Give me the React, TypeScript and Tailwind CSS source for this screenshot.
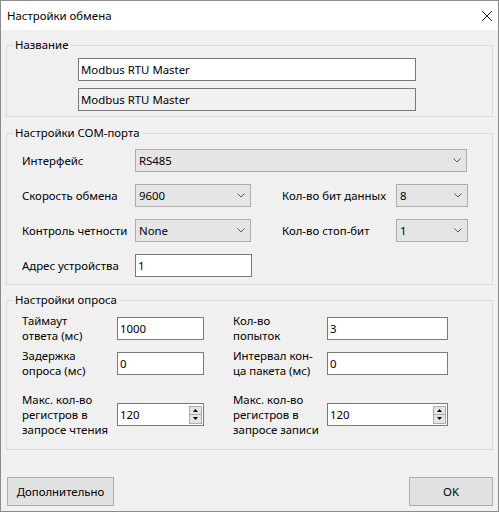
import React from 'react';

const Chevron = () => (
  <svg width="8" height="5" viewBox="0 0 8 5" className="shrink-0">
    <path d="M0.5 0.5 L4 4 L7.5 0.5" fill="none" stroke="#5a5a5a" strokeWidth="1" />
  </svg>
);

const Combo: React.FC<{ value: string; width: string }> = ({ value, width }) => (
  <div className={`${width} h-[23px] shrink-0 border border-[#adadad] bg-[#e5e5e5] flex items-center justify-between pl-[3px] pr-[5px]`}>
    <span>{value}</span>
    <Chevron />
  </div>
);

const TextBox: React.FC<{ value: string; width: string; disabled?: boolean }> = ({ value, width, disabled }) => (
  <div
    className={`${width} h-[23px] shrink-0 border border-[#7a7a7a] flex items-center pl-[2px] ${disabled ? 'bg-[#f0f0f0]' : 'bg-white'}`}
  >
    {value}
  </div>
);

const SpinBox: React.FC<{ value: string; width: string }> = ({ value, width }) => (
  <div className={`${width} h-[23px] shrink-0 border border-[#7a7a7a] bg-white flex items-center justify-between pl-[2px] pr-[1px]`}>
    <span>{value}</span>
    <div className="flex flex-col w-[13px]">
      <div className="h-[9px] border border-[#adadad] bg-[#e5e5e5] flex items-center justify-center">
        <svg width="5" height="3" viewBox="0 0 5 3">
          <path d="M0 3 L2.5 0 L5 3 Z" fill="#000" />
        </svg>
      </div>
      <div className="h-[9px] border border-[#adadad] border-t-0 bg-[#e5e5e5] flex items-center justify-center">
        <svg width="5" height="3" viewBox="0 0 5 3">
          <path d="M0 0 L2.5 3 L5 0 Z" fill="#000" />
        </svg>
      </div>
    </div>
  </div>
);

const Group: React.FC<{ title: string; className?: string; children: React.ReactNode }> = ({ title, className, children }) => (
  <fieldset className={`border border-[#dcdcdc] ${className ?? ''}`}>
    <legend className="ml-[6px] px-[2px] leading-[16px]">{title}</legend>
    {children}
  </fieldset>
);

export default function App() {
  return (
    <div className="w-[499px] h-[512px] border border-[#8c8c8c] bg-[#f0f0f0] flex flex-col text-[11.4px] leading-[15px] text-black font-['Noto_Sans',sans-serif]">
      {/* Заголовок окна */}
      <div className="h-[29px] bg-white flex items-center justify-between pl-[6px] pr-[6px]">
        <span>Настройки обмена</span>
        <svg width="10" height="10" viewBox="0 0 10 10">
          <path d="M0 0 L10 10 M10 0 L0 10" stroke="#1a1a1a" strokeWidth="1" />
        </svg>
      </div>

      <div className="flex-1 flex flex-col px-[5px]">
        {/* Название */}
        <Group title="Название" className="mt-[7px]">
          <div className="pt-[5px] pb-[5px] pl-[71px] flex flex-col gap-[7px]">
            <TextBox value="Modbus RTU Master" width="w-[338px]" />
            <TextBox value="Modbus RTU Master" width="w-[338px]" disabled />
          </div>
        </Group>

        {/* Настройки COM-порта */}
        <Group title="Настройки COM-порта" className="mt-[8px]">
          <div className="pt-[8px] pb-[7px] pl-[15px] flex flex-col gap-[12px]">
            <div className="flex items-center">
              <span className="w-[113px]">Интерфейс</span>
              <Combo value="RS485" width="w-[332px]" />
            </div>
            <div className="flex items-center">
              <span className="w-[113px]">Скорость обмена</span>
              <Combo value="9600" width="w-[116px]" />
              <span className="ml-[31px] w-[114px]">Кол-во бит данных</span>
              <Combo value="8" width="w-[72px]" />
            </div>
            <div className="flex items-center">
              <span className="w-[113px]">Контроль четности</span>
              <Combo value="None" width="w-[116px]" />
              <span className="ml-[31px] w-[114px]">Кол-во стоп-бит</span>
              <Combo value="1" width="w-[72px]" />
            </div>
            <div className="flex items-center">
              <span className="w-[113px]">Адрес устройства</span>
              <TextBox value="1" width="w-[117px]" />
            </div>
          </div>
        </Group>

        {/* Настройки опроса */}
        <Group title="Настройки опроса" className="mt-[7px]">
          <div className="pt-[5px] pb-[12px] pl-[15px] flex flex-col">
            <div className="h-[30px] flex items-center">
              <span className="w-[95px]">Таймаут<br />ответа (мс)</span>
              <TextBox value="1000" width="w-[87px]" />
              <span className="ml-[29px] w-[94px]">Кол-во<br />попыток</span>
              <TextBox value="3" width="w-[121px]" />
            </div>
            <div className="mt-[5px] h-[30px] flex items-center">
              <span className="w-[95px]">Задержка<br />опроса (мс)</span>
              <TextBox value="0" width="w-[87px]" />
              <span className="ml-[29px] w-[94px]">Интервал кон-<br />ца пакета (мс)</span>
              <TextBox value="0" width="w-[121px]" />
            </div>
            <div className="mt-[14px] h-[45px] flex items-center">
              <span className="w-[95px]">Макс. кол-во<br />регистров в<br />запросе чтения</span>
              <SpinBox value="120" width="w-[87px]" />
              <span className="ml-[29px] w-[94px]">Макс. кол-во<br />регистров в<br />запросе записи</span>
              <SpinBox value="120" width="w-[121px]" />
            </div>
          </div>
        </Group>

        <div className="mt-auto pb-[5px] pl-[1px] flex justify-between">
          <button className="w-[107px] h-[29px] border border-[#adadad] bg-[#e1e1e1]">Дополнительно</button>
          <button className="w-[84px] h-[29px] border border-[#adadad] bg-[#e1e1e1]">OK</button>
        </div>
      </div>
    </div>
  );
}
